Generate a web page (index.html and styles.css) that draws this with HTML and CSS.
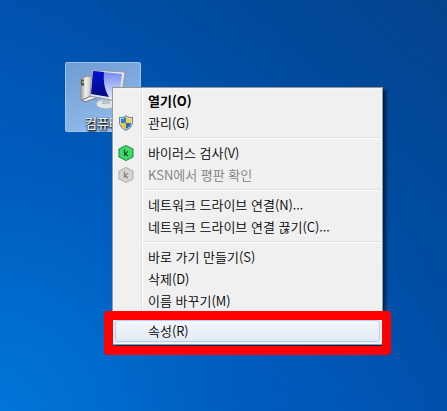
FILE: index.html
```html
<!DOCTYPE html>
<html lang="ko">
<head>
  <meta charset="UTF-8">
  <meta name="viewport" content="width=device-width, initial-scale=1.0">
  <title>바탕 화면</title>
  <link rel="stylesheet" href="styles.css">
</head>
<body>
  <main class="desktop">

    <!-- Desktop icon -->
    <a class="shortcut" href="#computer">
      <svg class="shortcut-icon" viewBox="0 0 48 44" aria-hidden="true">
        <defs>
          <linearGradient id="screen" x1="0" y1="0" x2="0" y2="1">
            <stop offset="0" stop-color="#6f86ee"/>
            <stop offset="1" stop-color="#e4ebff"/>
          </linearGradient>
          <linearGradient id="glare" x1="0" y1="0" x2="0" y2="1">
            <stop offset="0" stop-color="#0212cf"/>
            <stop offset="1" stop-color="#020a7c"/>
          </linearGradient>
          <linearGradient id="case" x1="0" y1="0" x2="1" y2="0">
            <stop offset="0" stop-color="#a5a5a3"/>
            <stop offset="0.4" stop-color="#f1efea"/>
            <stop offset="1" stop-color="#b5b6b9"/>
          </linearGradient>
        </defs>
        <path d="M2 10 8 7 14 8 14 27 5 32 2 31Z" fill="url(#case)" stroke="#8b8f94"/>
        <path d="M2 10 5 11 5 17 2 16Z" fill="#555"/>
        <circle cx="4" cy="13" r="1" fill="#9be255"/>
        <path d="M3 31 14 26 20 28 6 33Z" fill="#e9ecef" stroke="#6d737b"/>
        <ellipse cx="27" cy="35" rx="10" ry="5" fill="#dfe5ea" stroke="#a5adb7"/>
        <path d="M23 28H31V35H23Z" fill="#b8c2ce"/>
        <path d="M13 1 46 3 42 33 11 27Z" fill="#e3e7ec" stroke="#8e98a6"/>
        <path d="M14 2 43 5 40 30 12 25Z" fill="url(#screen)"/>
        <path d="M14 2 25 3 C24 13 26 22 30 28L12 25Z" fill="url(#glare)"/>
      </svg>
      <span class="shortcut-label">컴퓨터</span>
    </a>

    <!-- Context menu -->
    <nav class="menu" aria-label="컴퓨터">
      <div class="group">
        <button class="item default" type="button"><span class="icon"></span>열기(O)</button>
        <button class="item" type="button">
          <span class="icon">
            <svg viewBox="0 0 16 16" aria-hidden="true">
              <path d="M8 0 C10 2 12 2 15 2 V7 C15 11 12 14 8 16 C4 14 1 11 1 7 V2 C4 2 6 2 8 0Z" fill="#6f8798"/>
              <path d="M8 1 C10 3 12 3 14 3 V7 C14 11 11 13 8 15 C5 13 2 11 2 7 V3 C4 3 6 3 8 1Z" fill="#cfdfe8"/>
              <path d="M8 2V8H3V4C5 4 6 3 8 2Z" fill="#2d7fc4"/>
              <path d="M8 2V8H13V4C11 4 10 3 8 2Z" fill="#f6cf45"/>
              <path d="M3 8H8V14C5 12 3 11 3 8Z" fill="#f3c435"/>
              <path d="M13 8H8V14C11 12 13 11 13 8Z" fill="#216eb5"/>
            </svg>
          </span>관리(G)
        </button>
      </div>

      <div class="group">
        <button class="item" type="button">
          <span class="icon">
            <svg viewBox="0 0 16 16" aria-hidden="true">
              <path d="M8 .5 15 4V12L8 15.5 1 12V4Z" fill="#3ddc68" stroke="#24803f" stroke-linejoin="round"/>
              <path d="M6.5 4.5V11M10 6.5 7 8.5 10 11" fill="none" stroke="#12562c" stroke-width="1.3"/>
            </svg>
          </span>바이러스 검사(V)
        </button>
        <button class="item" type="button" disabled>
          <span class="icon">
            <svg viewBox="0 0 16 16" aria-hidden="true">
              <path d="M8 .5 15 4V12L8 15.5 1 12V4Z" fill="#d4d4d4" stroke="#aeaeae" stroke-linejoin="round"/>
              <path d="M6.5 4.5V11M10 6.5 7 8.5 10 11" fill="none" stroke="#858585" stroke-width="1.3"/>
            </svg>
          </span>KSN에서 평판 확인
        </button>
      </div>

      <div class="group">
        <button class="item" type="button"><span class="icon"></span>네트워크 드라이브 연결(N)...</button>
        <button class="item" type="button"><span class="icon"></span>네트워크 드라이브 연결 끊기(C)...</button>
      </div>

      <div class="group">
        <button class="item" type="button"><span class="icon"></span>바로 가기 만들기(S)</button>
        <button class="item" type="button"><span class="icon"></span>삭제(D)</button>
        <button class="item" type="button"><span class="icon"></span>이름 바꾸기(M)</button>
      </div>

      <div class="group marked">
        <button class="item selected" type="button"><span class="icon"></span>속성(R)</button>
      </div>
    </nav>

  </main>
</body>
</html>
```
FILE: styles.css
```css
*,
*::before,
*::after {
  box-sizing: border-box;
  margin: 0;
  padding: 0;
}

body {
  font-family: "Noto Sans CJK KR", sans-serif;
  font-size: 13px;
}

.desktop {
  position: relative;
  min-height: 100vh;
  overflow: hidden;
  background:
    radial-gradient(circle at 0% 100%, rgba(0, 132, 230, 0.7), rgba(0, 110, 215, 0.3) 40%, transparent 75%),
    linear-gradient(to bottom left, #04438d, #004b9f 30%, #0052b0 60%, #0056b8);
}

/* Desktop icon */
.shortcut {
  position: absolute;
  left: 65px;
  top: 62px;
  width: 76px;
  height: 70px;
  padding-top: 6px;
  display: flex;
  flex-direction: column;
  align-items: center;
  gap: 2px;
  border: 1px solid #9fc3e8;
  border-radius: 2px;
  background: linear-gradient(160deg, #6f9dd2, #86b1e3 60%, #9cc2ee);
  color: #fff;
  text-decoration: none;
}

.shortcut-icon {
  width: 48px;
  height: 44px;
}

.shortcut-label {
  font-size: 13px;
  line-height: 16px;
  text-shadow: 0 1px 2px #000, 1px 1px 2px #000;
}

/* Context menu */
.menu {
  position: absolute;
  left: 112px;
  top: 87px;
  min-width: 271px;
  padding: 2px;
  border: 1px solid #979797;
  background: linear-gradient(to right, transparent 28px, #e2e3e3 28px, #e2e3e3 29px, #fff 29px, #fff 30px, transparent 30px) #f0f0f0;
  box-shadow: inset 0 0 0 1px #f5f5f5, 3px 3px 3px rgba(0, 0, 0, 0.55);
}

.group {
  display: flow-root;
}

.group + .group::before {
  content: "";
  display: block;
  height: 2px;
  margin: 3px 0 3px 28px;
  border-top: 1px solid #e0e0e0;
  border-bottom: 1px solid #fff;
}

.item {
  display: flex;
  align-items: center;
  gap: 14px;
  width: 100%;
  height: 22px;
  padding: 0 12px 0 3px;
  border: 0;
  background: none;
  color: #000;
  font: inherit;
  font-weight: 350;
  line-height: 20px;
  text-align: left;
  white-space: nowrap;
}

.item.default {
  font-weight: bold;
}

.item:disabled {
  color: #7d7d7d;
}

.item.selected {
  border: 1px solid #aecff7;
  border-radius: 3px;
  padding: 0 11px 0 2px;
  background: linear-gradient(rgba(245, 247, 251, 0.9), rgba(224, 234, 248, 0.9));
}

.icon {
  display: flex;
  width: 16px;
  height: 16px;
}

.icon svg {
  width: 16px;
  height: 16px;
}

/* Red marker around the properties row */
.marked {
  position: relative;
}

.marked::after {
  content: "";
  position: absolute;
  inset: -1px -11px -13px;
  border: 9px solid #fe0000;
  border-radius: 4px;
  pointer-events: none;
}
```
